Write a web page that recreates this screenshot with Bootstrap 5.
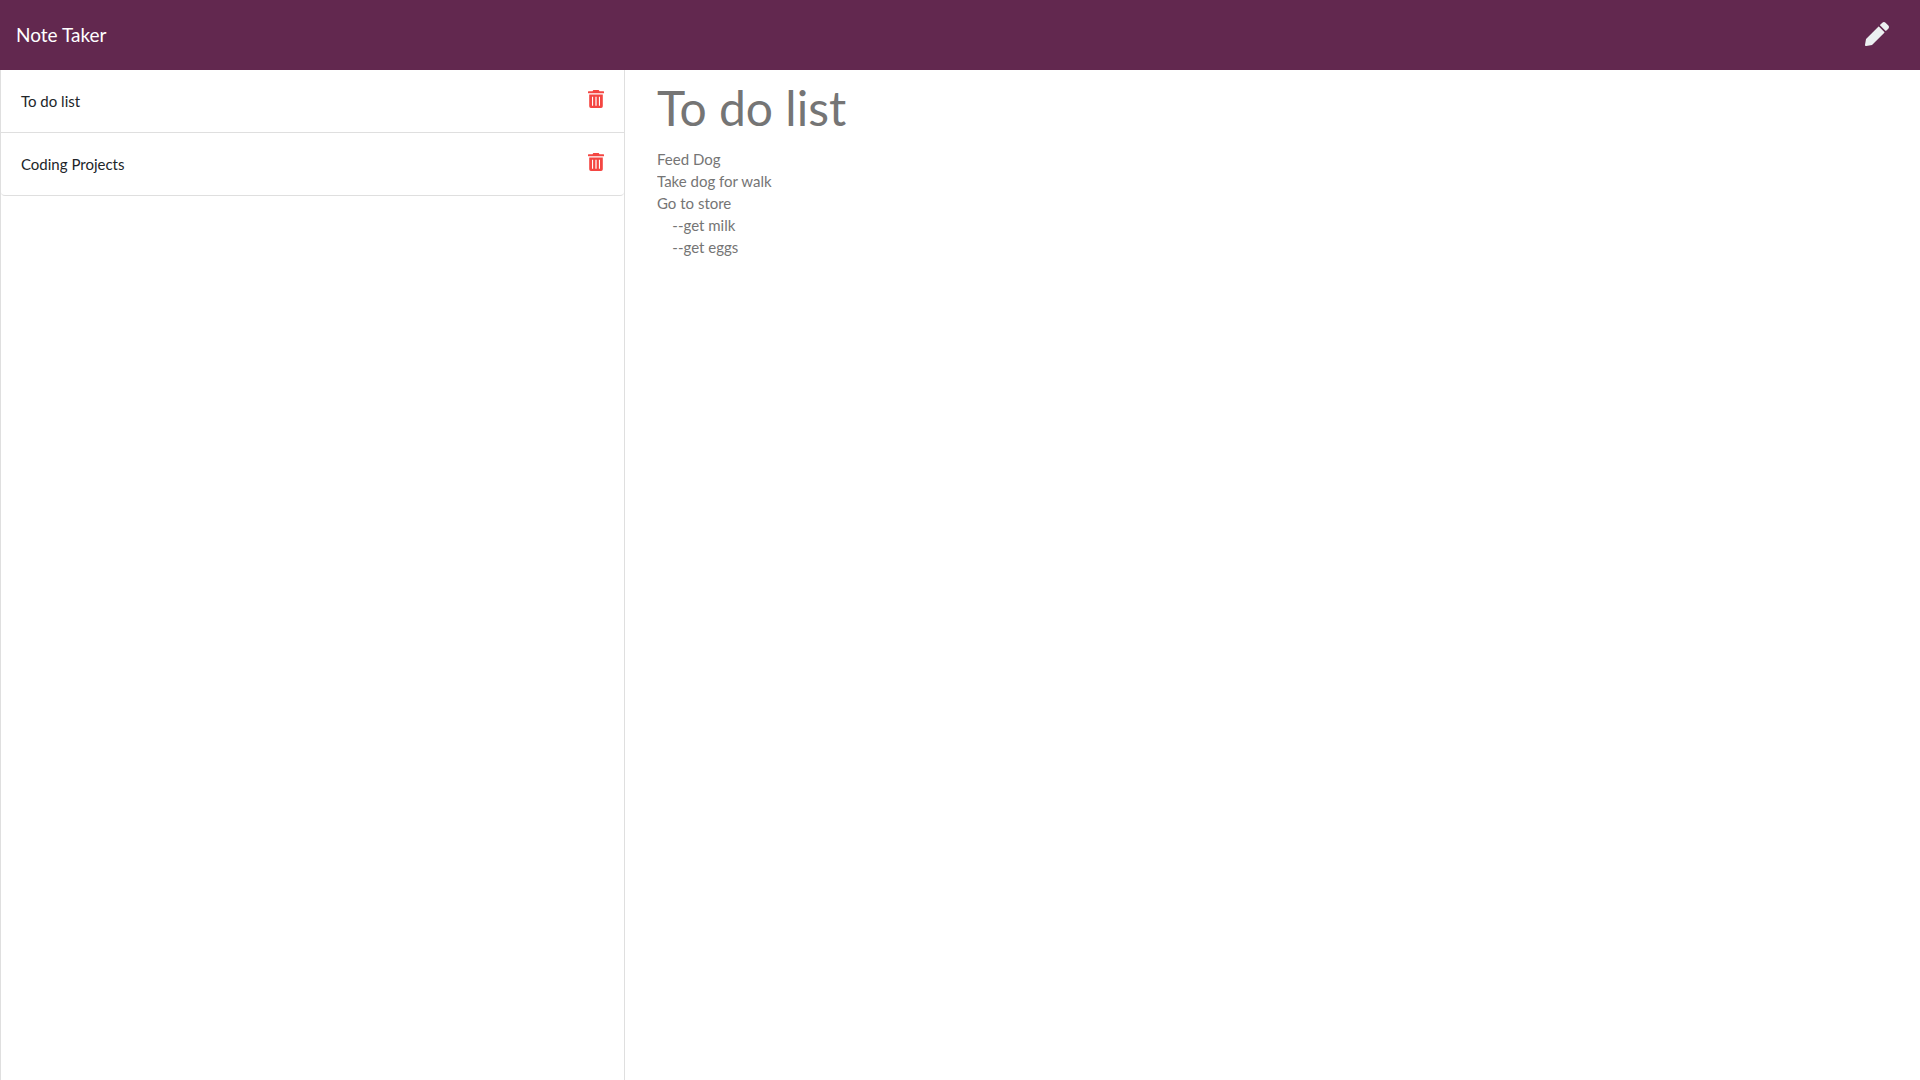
<!DOCTYPE html>
<html lang="en">
<head>
<meta charset="utf-8">
<meta name="viewport" content="width=device-width, initial-scale=1">
<title>Note Taker</title>
<link rel="stylesheet" href="https://cdn.jsdelivr.net/npm/bootstrap@5.3.0/dist/css/bootstrap.min.css">
<style>
  body { font-family: Lato, "Liberation Sans", sans-serif; font-size: 15px; line-height: 22px; color: #212529; }
  .topbar { height: 70px; padding: 0 31px 2px 16px; background: #62284f; }
  .topbar .navbar-brand { padding: 2px 0 0; font-size: 19px; line-height: 28px; color: #fff; }
  .topbar svg { width: 24px; height: 24px; fill: #ecf0f1; }
  .notes-pane { padding: 0 15px 0 0; }
  .notes-frame { border: solid #dfdfdf; border-width: 0 1px; }
  .note-item { height: 63px; padding: 0 20px; border-bottom: 1px solid #dfdfdf; }
  .note-item:last-child { border-radius: 0 0 4px 4px; }
  .note-link { color: inherit; }
  .trash-btn { margin-bottom: 5px; }
  .trash-btn svg { width: 16px; height: 18px; fill: #f44642; }
  .editor-pane { padding: 0 15px 0 17px; }
  .note-title, .note-body { color: #757575; outline: 0; resize: none; }
  .note-title { height: 76px; font-size: 48px; line-height: 76px; }
  .note-body { margin-top: 2px; line-height: 22px; }
</style>
</head>
<body class="vh-100 d-flex flex-column overflow-hidden">
<nav class="navbar topbar flex-shrink-0 justify-content-between">
  <a class="navbar-brand m-0" href="#">Note Taker</a>
  <button type="button" class="btn border-0 p-0 lh-1" aria-label="New note">
    <svg viewBox="0 0 512 512" aria-hidden="true"><path d="M497.900 142.100l-46.100 46.100c-4.700 4.700-12.300 4.700-17 0l-111-111c-4.700-4.700-4.700-12.300 0-17l46.100-46.100c18.700-18.700 49.100-18.700 67.900 0l60.100 60.100c18.800 18.700 18.800 49.100 0 67.900zM284.200 99.800L21.600 362.400.4 483.900c-2.900 16.400 11.400 30.600 27.800 27.800l121.500-21.300 262.600-262.600c4.700-4.700 4.700-12.300 0-17l-111-111c-4.800-4.700-12.400-4.700-17.100 0z"/></svg>
  </button>
</nav>
<main class="container-fluid flex-grow-1 px-0">
  <div class="row g-0 h-100">
    <aside class="col-4 notes-pane">
      <div class="notes-frame h-100">
        <ul class="list-unstyled m-0">
          <li class="note-item d-flex align-items-center justify-content-between">
            <a class="note-link text-decoration-none" href="#">To do list</a>
            <button type="button" class="btn border-0 p-0 lh-1 trash-btn" aria-label="Delete To do list"><svg viewBox="0 0 16 18" aria-hidden="true"><path fill-rule="evenodd" d="M0.500 1.200H4.500L5.300 0H10.700L11.500 1.200H15.500Q16 1.200 16 1.700V2.800Q16 3.300 15.500 3.300H.5Q0 3.300 0 2.800V1.700Q0 1.200 .5 1.200ZM1.200 4.500H14.800V16.300Q14.800 18 13.100 18H2.900Q1.200 18 1.200 16.300ZM4 6.700V15.700H5.100V6.700ZM7.400 6.700V15.700H8.600V6.700ZM10.900 6.700V15.700H12V6.700Z"/></svg></button>
          </li>
          <li class="note-item d-flex align-items-center justify-content-between">
            <a class="note-link text-decoration-none" href="#">Coding Projects</a>
            <button type="button" class="btn border-0 p-0 lh-1 trash-btn" aria-label="Delete Coding Projects"><svg viewBox="0 0 16 18" aria-hidden="true"><path fill-rule="evenodd" d="M0.500 1.200H4.500L5.300 0H10.700L11.500 1.200H15.500Q16 1.200 16 1.700V2.800Q16 3.300 15.500 3.300H.5Q0 3.300 0 2.800V1.700Q0 1.200 .5 1.200ZM1.200 4.500H14.800V16.300Q14.800 18 13.100 18H2.900Q1.200 18 1.200 16.300ZM4 6.700V15.700H5.100V6.700ZM7.400 6.700V15.700H8.600V6.700ZM10.900 6.700V15.700H12V6.700Z"/></svg></button>
          </li>
        </ul>
      </div>
    </aside>
    <section class="col-8 editor-pane d-flex flex-column">
      <input class="note-title w-100 border-0 p-0 bg-transparent" type="text" value="To do list" aria-label="Note title" readonly>
      <textarea class="note-body w-100 flex-grow-1 border-0 p-0 bg-transparent" aria-label="Note text" readonly>Feed Dog
Take dog for walk
Go to store
    --get milk
    --get eggs</textarea>
    </section>
  </div>
</main>
<script src="https://cdn.jsdelivr.net/npm/bootstrap@5.3.0/dist/js/bootstrap.bundle.min.js"></script>
</body>
</html>
